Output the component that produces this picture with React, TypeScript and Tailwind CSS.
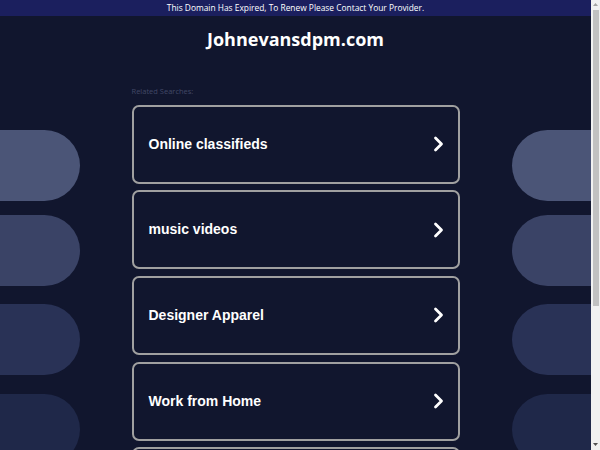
const searches = ['Online classifieds', 'music videos', 'Designer Apparel', 'Work from Home', 'Online Degrees'];

const pills = [
  { color: 'bg-[#4b5577]', space: 'mt-[114px]' },
  { color: 'bg-[#3a4366]', space: 'mt-[14px]' },
  { color: 'bg-[#293256]', space: 'mt-[18px]' },
  { color: 'bg-[#1f2849]', space: 'mt-[19px]' },
];

function Chevron() {
  return (
    <svg width="12" height="16" viewBox="0 0 12 16" fill="none" className="shrink-0">
      <path d="M2.5 2 L8.5 8 L2.5 14" stroke="white" strokeWidth="2.8" strokeLinecap="round" strokeLinejoin="round" />
    </svg>
  );
}

function SideColumn({ side }: { side: 'left' | 'right' }) {
  return (
    <div className="flex-1 flex flex-col">
      {pills.map((p, i) => (
        <div
          key={i}
          className={
            side === 'left'
              ? `h-[71px] mr-[52px] rounded-r-full ${p.color} ${p.space}`
              : `h-[71px] ml-[52px] rounded-l-full ${p.color} ${p.space}`
          }
        />
      ))}
    </div>
  );
}

// page scrollbar as it shows in the screenshot
function Scrollbar() {
  return (
    <div className="w-[9px] shrink-0 bg-[#f1f1f1] flex flex-col items-center">
      <svg width="9" height="9" viewBox="0 0 9 9" className="shrink-0">
        <path d="M2 6 L4.5 3 L7 6 Z" fill="#a3a3a3" />
      </svg>
      <div className="w-[6px] h-[296px] mt-[1px] bg-[#c1c1c1]" />
      <div className="flex-1" />
      <svg width="9" height="9" viewBox="0 0 9 9" className="shrink-0 mb-[1px]">
        <path d="M2 3 L4.5 6 L7 3 Z" fill="#505050" />
      </svg>
    </div>
  );
}

export default function App() {
  return (
    <div className="h-[450px] flex overflow-hidden bg-[#11162e]" style={{ fontFamily: '"Open Sans", sans-serif' }}>
      <div className="flex-1 min-w-0 flex flex-col">
        <div className="h-[16px] shrink-0 bg-[#1b1f5e] flex items-center justify-center text-[8.4px] text-white leading-none">
          This Domain Has Expired, To Renew Please Contact Your Provider.
        </div>
        <div className="flex">
          <SideColumn side="left" />
          <div className="w-[328px] flex flex-col pb-[50px]">
            <h1 className="text-center text-white text-[18px] font-bold leading-none mt-[14px]">Johnevansdpm.com</h1>
            <div className="text-[7.5px] text-[#414866] mt-[40px] leading-none">Related Searches:</div>
            <div className="flex flex-col gap-[6.7px] mt-[9px]">
              {searches.map((s) => (
                <div
                  key={s}
                  className="h-[79px] border-2 border-[#a0a0a0] rounded-[7px] flex items-center justify-between pl-[15px] pr-[13px]"
                >
                  <span
                    className="text-white text-[14px] font-bold"
                    style={{ fontFamily: '"Liberation Sans", Arial, sans-serif' }}
                  >
                    {s}
                  </span>
                  <Chevron />
                </div>
              ))}
            </div>
          </div>
          <SideColumn side="right" />
        </div>
      </div>
      <Scrollbar />
    </div>
  );
}
